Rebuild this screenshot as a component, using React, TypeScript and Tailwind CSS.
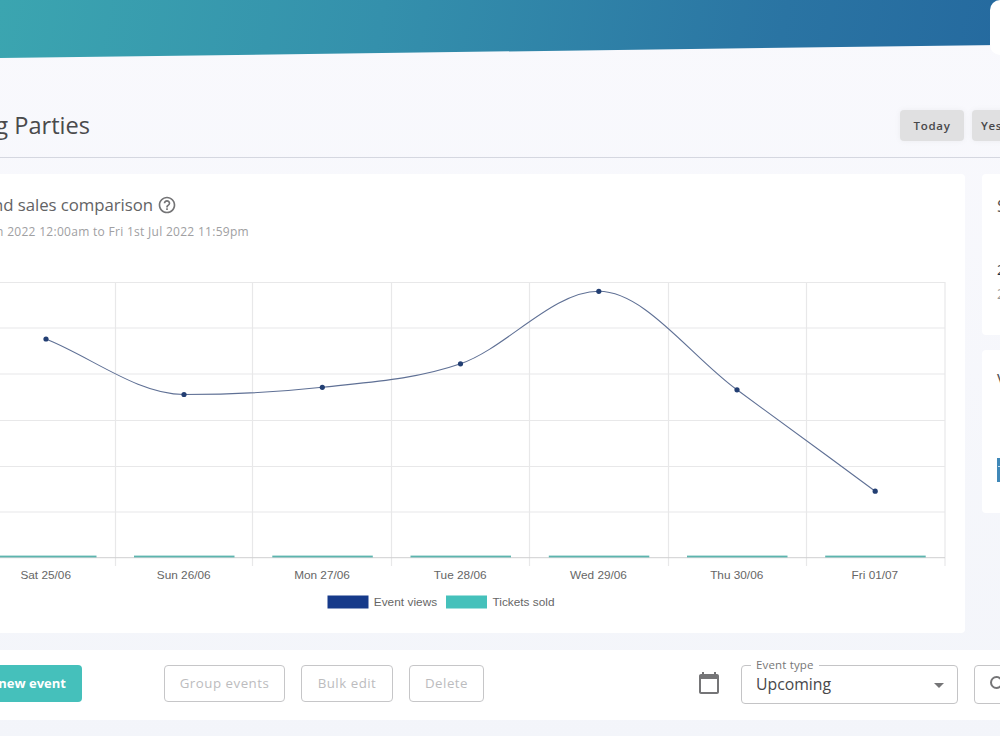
import { FC, ReactNode } from "react";
import clsx from "clsx";
import {
  MdArrowDropDown,
  MdCalendarToday,
  MdHelpOutline,
  MdSearch,
} from "react-icons/md";

type Point = { x: number; y: number };

const DAYS = [
  { label: "Sat 25/06", x: 46, y: 339 },
  { label: "Sun 26/06", x: 184, y: 394.5 },
  { label: "Mon 27/06", x: 322.3, y: 387.3 },
  { label: "Tue 28/06", x: 460.5, y: 363.8 },
  { label: "Wed 29/06", x: 598.8, y: 291.3 },
  { label: "Thu 30/06", x: 737, y: 389.8 },
  { label: "Fri 01/07", x: 875.2, y: 491.2 },
];

const ROWS = [282.5, 328, 374, 420.5, 466.5, 512];
const COLUMNS = [115.5, 252.5, 391.5, 529.5, 668.5, 806.5, 945];

// monotone cubic interpolation, so the line never overshoots a point
const buildCurve = (points: Point[]) => {
  const last = points.length - 1;
  const slopes = points
    .slice(1)
    .map((p, i) => (p.y - points[i].y) / (p.x - points[i].x));
  const tangents = points.map((_, i) => {
    if (i === 0) return slopes[0];
    if (i === last) return slopes[last - 1];
    if (slopes[i - 1] * slopes[i] <= 0) return 0;
    return (slopes[i - 1] + slopes[i]) / 2;
  });
  slopes.forEach((slope, i) => {
    const alpha = tangents[i] / slope;
    const beta = tangents[i + 1] / slope;
    const magnitude = alpha * alpha + beta * beta;
    if (magnitude <= 9) return;
    const tau = 3 / Math.sqrt(magnitude);
    tangents[i] = alpha * tau * slope;
    tangents[i + 1] = beta * tau * slope;
  });
  return points.reduce((path, p, i) => {
    if (i === 0) return `M${p.x} ${p.y}`;
    const prev = points[i - 1];
    const dx = (p.x - prev.x) / 3;
    return `${path} C${prev.x + dx} ${prev.y + dx * tangents[i - 1]} ${
      p.x - dx
    } ${p.y - dx * tangents[i]} ${p.x} ${p.y}`;
  }, "");
};

const Chart: FC = () => (
  <svg
    width="965"
    height="350"
    viewBox="0 270 965 350"
    className="block shrink-0"
    fontFamily="'Liberation Sans', Arial, sans-serif"
    fontSize="11.8"
    fill="#666"
  >
    <g stroke="#e8e8e9" strokeWidth="1.2">
      {ROWS.map((y) => (
        <line key={y} x1="0" x2="945" y1={y} y2={y} />
      ))}
      {COLUMNS.map((x) => (
        <line key={x} x1={x} x2={x} y1="282" y2="566" />
      ))}
    </g>
    <line x1="0" x2="945" y1="557.7" y2="557.7" stroke="#cfcfd0" />
    {DAYS.map(({ label, x }) => (
      <g key={label}>
        <rect x={x - 50} y="555.6" width="100.5" height="1.8" fill="#5cb5ae" />
        <text x={x - 0.3} y="579.3" textAnchor="middle">
          {label}
        </text>
      </g>
    ))}
    <path d={buildCurve(DAYS)} fill="none" stroke="#5f7095" strokeWidth="1.1" />
    {DAYS.map(({ label, x, y }) => (
      <circle key={label} cx={x} cy={y} r="2.6" fill="#233f73" />
    ))}
    <rect x="327.5" y="595.5" width="41" height="13" fill="#163a8a" />
    <text x="373.7" y="605.5" textLength="63.5">
      Event views
    </text>
    <rect x="446" y="595.5" width="41" height="13" fill="#45c1bb" />
    <text x="492.5" y="605.5" textLength="62">
      Tickets sold
    </text>
  </svg>
);

const OutlineButton: FC<{ className: string; children: ReactNode }> = ({
  className,
  children,
}) => (
  <button
    className={clsx(
      "h-[37px] shrink-0 rounded-[4px] border border-[#c6c6c8] text-[13.3px] tracking-[0.5px] whitespace-nowrap text-[#bcbcbe]",
      className
    )}
  >
    {children}
  </button>
);

const RangeButton: FC<{ className: string; children: ReactNode }> = ({
  className,
  children,
}) => (
  <button
    className={clsx(
      "h-[31px] shrink-0 rounded-[4px] bg-[#e0e0e1] text-[11.5px] font-semibold tracking-[0.7px] text-[#48484a] shadow-[0_0_6px_rgba(0,0,0,0.05)]",
      className
    )}
  >
    {children}
  </button>
);

export default function App() {
  return (
    <div className="relative flex h-[750px] w-[1000px] flex-col overflow-hidden bg-linear-to-b from-[#f9f9fd] to-[#f3f5fa] font-['Open_Sans',sans-serif]">
      <div className="h-[58px] shrink-0 bg-linear-[100deg,#3ba5b0,#3490ac_38%,#2a74a3_78%,#256a9f] [clip-path:polygon(0_0,100%_0,100%_45px,0_58px)]" />
      <div className="absolute top-0 -right-5 h-[55px] w-[30px] rounded-[10px] bg-white" />

      <header className="flex h-[100px] shrink-0 items-start justify-between border-b border-[#d5d7e0]">
        <h1 className="mt-[50px] flex w-[90px] justify-end text-[23.6px] leading-[34px] whitespace-nowrap text-[#4a4a4c]">
          g Parties
        </h1>
        <div className="mt-[52px] flex w-[100px] gap-2">
          <RangeButton className="w-16">Today</RangeButton>
          <RangeButton className="w-20 pl-[9px] text-left">Yes</RangeButton>
        </div>
      </header>

      <main className="mt-4 flex h-[459px] shrink-0 gap-[17px]">
        <section className="flex w-[965px] shrink-0 flex-col overflow-hidden rounded-r-[4px] bg-white">
          <div className="mt-[18px] flex h-[26px] w-[177px] items-center justify-end gap-1 self-start whitespace-nowrap text-[#636365]">
            <h2 className="text-[16.8px] tracking-[-0.05px]">
              nd sales comparison
            </h2>
            <MdHelpOutline size={20} className="shrink-0 text-[#747476]" />
          </div>
          <p className="mt-1 flex h-5 w-[249px] items-center justify-end text-[12px] tracking-[0.29px] whitespace-nowrap text-[#a0a0a2]">
            n 2022 12:00am to Fri 1st Jul 2022 11:59pm
          </p>
          <div className="mt-7">
            <Chart />
          </div>
        </section>
        <aside className="flex w-9 shrink-0 flex-col gap-[15px]">
          <div className="h-[161px] rounded-[4px] bg-white pl-[15px] text-[#555]">
            <div className="pt-5 text-[17px] leading-6">S</div>
            <div className="mt-10 text-[14px] leading-6 text-[#234]">2</div>
            <div className="text-[14px] leading-6 text-[#999]">2</div>
          </div>
          <div className="h-[163px] rounded-[4px] bg-white pl-[15px] text-[#555]">
            <div className="pt-[18px] text-[17px] leading-6">V</div>
            <div className="mt-[66px] h-6 bg-[#4088b8] pt-2">
              <div className="ml-px h-px bg-[#c8dfee]" />
            </div>
          </div>
        </aside>
      </main>

      <section className="mt-[17px] flex h-[70px] shrink-0 items-start bg-white pt-[15px]">
        <button className="flex h-[37px] w-[82px] shrink-0 items-center justify-end rounded-r-[4px] bg-[#45c0bb] pr-4 text-[13px] font-bold whitespace-nowrap text-white">
          new event
        </button>
        <div className="ml-[82px] flex gap-4">
          <OutlineButton className="w-[121px]">Group events</OutlineButton>
          <OutlineButton className="w-[92px]">Bulk edit</OutlineButton>
          <OutlineButton className="w-[75px]">Delete</OutlineButton>
        </div>
        <MdCalendarToday
          size={24}
          className="mt-[6px] ml-[213px] shrink-0 text-[#757577]"
        />
        <div className="relative ml-5 flex h-[39px] w-[217px] shrink-0 items-center justify-between rounded-[4px] border border-[#c4c4c6] pr-[6px] pl-[14px] text-[15.8px] text-[#48484a]">
          <span className="absolute -top-[10px] left-[9px] bg-white px-[5px] text-[11.5px] leading-[17px] tracking-[0.15px] text-[#777]">
            Event type
          </span>
          <span className="pt-px">Upcoming</span>
          <MdArrowDropDown size={24} className="text-[#757577]" />
        </div>
        <div className="ml-4 flex h-[39px] w-[60px] shrink-0 items-center rounded-[4px] border border-[#c4c4c6] pl-3">
          <MdSearch size={24} className="shrink-0 text-[#757577]" />
        </div>
      </section>

      <section className="mt-4 h-[14px] shrink-0 bg-white" />
    </div>
  );
}
